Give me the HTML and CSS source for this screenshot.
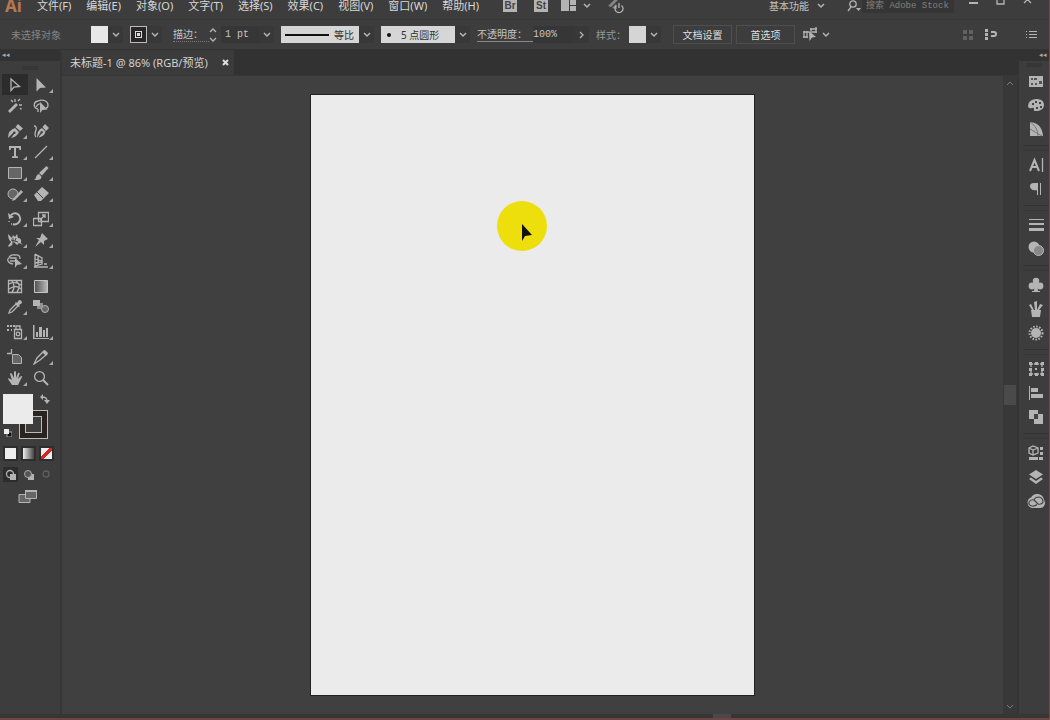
FILE: index.html
```html
<!DOCTYPE html>
<html lang="zh-CN">
<head>
<meta charset="utf-8">
<title>未标题-1</title>
<link rel="stylesheet" href="styles.css">
</head>
<body>
<header class="menubar">
  <span class="logo">Ai</span>
  <nav class="menus">
    <button>文件(F)</button><button>编辑(E)</button><button>对象(O)</button><button>文字(T)</button><button>选择(S)</button><button>效果(C)</button><button>视图(V)</button><button>窗口(W)</button><button>帮助(H)</button>
  </nav>
  <div class="apps">
    <button class="app">Br</button>
    <button class="app">St</button>
    <button class="arrange" aria-label="排列文档"><svg width="16" height="12" viewBox="0 0 16 12"><path d="M0 0h8v11H0zM9 0h6v5H9zM9 6h6v5H9z"/></svg><svg class="chev" viewBox="0 0 8 6"><path d="M1 1l3 3 3-3"/></svg></button>
    <button aria-label="GPU 性能"><svg width="18" height="16" viewBox="0 0 18 16"><path d="M1 8L8 1h4L4 9zM5 10l4-4 1 5z" opacity=".6"/><path class="ln" d="M9.500 7.500a4 4 0 1 0 5 0M12 5v5"/></svg></button>
  </div>
  <div class="window-tools">
    <button class="workspace">基本功能<svg class="chev" viewBox="0 0 8 6"><path d="M1 1l3 3 3-3"/></svg></button>
    <label class="search"><svg width="15" height="12" viewBox="0 0 15 12"><circle class="ln" cx="6" cy="4" r="3.200"/><path class="ln" d="M4 7L1 11"/><path d="M9 8h5l-2.500 3z"/></svg><input type="text" placeholder="搜索 Adobe Stock" aria-label="搜索 Adobe Stock"></label>
    <div class="win">
      <button aria-label="最小化"><svg width="10" height="12" viewBox="0 0 10 12"><path d="M0 7h9v2H0z"/></svg></button>
      <button aria-label="最大化"><svg width="10" height="12" viewBox="0 0 10 12"><path class="ln" d="M1 1h7v8H1z"/></svg></button>
      <button aria-label="关闭"><svg width="10" height="12" viewBox="0 0 10 12"><path class="ln" d="M1 1l7 7M8 1L1 8"/></svg></button>
    </div>
  </div>
</header>

<section class="control" aria-label="控制">
  <span class="state">未选择对象</span>
  <div class="pair"><button class="swatch" aria-label="填色"></button><button class="drop" aria-label="填色选项"><svg class="chev" viewBox="0 0 8 6"><path d="M1 1l3 3 3-3"/></svg></button></div>
  <div class="pair"><button class="swatch line" aria-label="描边颜色"><svg width="7" height="7" viewBox="0 0 7 7"><path d="M0 0h7v7H0z" fill="#ddd"/><path d="M1 1h5v5H1z" fill="#222"/><path d="M2 2h3v3H2z" fill="#ddd"/></svg></button><button class="drop" aria-label="描边选项"><svg class="chev" viewBox="0 0 8 6"><path d="M1 1l3 3 3-3"/></svg></button></div>
  <div class="pair weight"><label for="weight">描边：</label><button class="spin" aria-label="调整粗细"><svg width="8" height="14" viewBox="0 0 8 14"><path class="ln" d="M1 4l3-3 3 3M1 10l3 3 3-3"/></svg></button><input id="weight" type="text" value="1 pt"><button class="drop" aria-label="粗细选项"><svg class="chev" viewBox="0 0 8 6"><path d="M1 1l3 3 3-3"/></svg></button></div>
  <div class="pair"><div class="light profile"><i></i><select aria-label="变量宽度配置文件"><option>等比</option></select></div><span class="drop"><svg class="chev" viewBox="0 0 8 6"><path d="M1 1l3 3 3-3"/></svg></span></div>
  <div class="pair"><div class="light brush"><b></b><select aria-label="画笔定义"><option>5 点圆形</option></select></div><span class="drop"><svg class="chev" viewBox="0 0 8 6"><path d="M1 1l3 3 3-3"/></svg></span></div>
  <div class="pair opacity"><label for="opacity">不透明度：</label><input id="opacity" type="text" value="100%"><button class="drop" aria-label="不透明度选项"><svg width="6" height="8" viewBox="0 0 6 8"><path class="ln" d="M1 1l3 3-3 3"/></svg></button></div>
  <div class="pair style"><span class="dim">样式：</span><button class="swatch soft" aria-label="图形样式"></button><button class="drop" aria-label="样式选项"><svg class="chev" viewBox="0 0 8 6"><path d="M1 1l3 3 3-3"/></svg></button></div>
  <div class="actions"><button class="push">文档设置</button><button class="push">首选项</button></div>
  <button class="similar" aria-label="选择类似的对象"><svg width="15" height="15" viewBox="0 0 15 15"><path class="ln" d="M1 4v7M4 4v7M0 5h6M0 10h5M8 1v5M13 0v6M7 2h7M9 5h5"/><path d="M6 4l7 6-4 .5L6.500 14z"/></svg><svg class="chev" viewBox="0 0 8 6"><path d="M1 1l3 3 3-3"/></svg></button>
  <div class="far">
    <svg class="faint" width="12" height="12" viewBox="0 0 12 12"><path d="M1 1h4v4H1zM7 1h4v4H7zM1 7h4v4H1zM7 7h4v4H7z"/></svg>
    <button aria-label="对齐像素"><svg width="14" height="14" viewBox="0 0 14 14"><path d="M1 1h3v3H1zM1 5h3v3H1zM1 9h3v3H1z"/><path class="arc" d="M7 4h3q2 0 2 2t-2 2H7"/></svg></button>
    <button aria-label="面板菜单"><svg width="12" height="10" viewBox="0 0 12 10"><path d="M0 1h1v1H0zM0 4h1v1H0zM0 7h1v1H0zM3 1h8v1H3zM3 4h8v1H3zM3 7h8v1H3z"/></svg></button>
  </div>
</section>

<main class="work">
  <aside class="toolbox">
    <div class="strip">◂◂</div>
    <div class="grip"></div>
    <div class="tools">
      <div class="group">
        <button class="on" aria-label="选择"><svg class="ic" viewBox="0 0 16 16"><path class="ln" d="M4 2v11.500l3-3.500 5.500-.5z"/></svg></button>
        <button class="sub" aria-label="直接选择"><svg class="ic" viewBox="0 0 16 16"><path d="M3.500 1v13.500L7 11l6-.5z"/></svg></button>
        <button aria-label="魔棒"><svg class="ic" viewBox="0 0 16 16"><path d="M1 13l8-8 2 2-8 8z"/><path class="ln" d="M8 1v3M11 3l2-2M12 7h3M4 2l2 2M13 10l1.500 1.500"/></svg></button>
        <button aria-label="套索"><svg class="ic" viewBox="0 0 16 16"><path class="ln" d="M5 11C0 10 0 4 5 3c5-2 10 0 10 4 0 2-1 3-2 3M3 9q3-5 6-2M5 11v3"/><path d="M7 4v11l2.500-3 5-.5z"/></svg></button>
      </div>
      <div class="group">
        <button class="sub" aria-label="钢笔"><svg class="ic" viewBox="0 0 16 16"><path d="M1 15q0-8 7-10l4 4q-2 5-8 6l3-4a1.300 1.300 0 1 0-1-1zM8.500 4l2.500-3 5 4.500L13 8z"/></svg></button>
        <button aria-label="曲率"><svg class="ic" viewBox="0 0 16 16"><path d="M4 15q0-8 5-10l3.500 3.500q-1 5-7 6l3-4a1.200 1.200 0 1 0-1-1zM9.500 4L12 1l4 4-3 3z"/><path class="ln" d="M1 3q3 0 2 4-2 5 0 7"/></svg></button>
        <button class="sub" aria-label="文字"><svg class="ic" viewBox="0 0 16 16"><path d="M2 2h12v4h-1.500L12 4H9v8l2 .5V14H5v-1.500L7 12V4H4l-.5 2H2z"/></svg></button>
        <button class="sub" aria-label="直线段"><svg class="ic" viewBox="0 0 16 16"><path class="ln" d="M2 14L14 2"/></svg></button>
        <button class="sub" aria-label="矩形"><svg class="ic" viewBox="0 0 16 16"><path class="boxed" d="M1.500 2.500h13v11h-13z"/></svg></button>
        <button class="sub" aria-label="画笔"><svg class="ic" viewBox="0 0 16 16"><path d="M6 8l7.500-7 2 2L9 10.500zM1 15q2-1 2-3 1-3 3-3l2.500 2.500q0 3-3.500 3.500z"/></svg></button>
        <button class="sub" aria-label="Shaper"><svg class="ic" viewBox="0 0 16 16"><circle class="boxed" cx="6" cy="8" r="5"/><path d="M6 13l8-9 2 2-8 8-3 1z"/></svg></button>
        <button class="sub" aria-label="橡皮擦"><svg class="ic" viewBox="0 0 16 16"><path d="M1 9l8-8 7 6-8 8H5z"/><path class="cut" d="M4 6l6 6"/></svg></button>
      </div>
      <div class="group">
        <button class="sub" aria-label="旋转"><svg class="ic" viewBox="0 0 16 16"><path class="arc" d="M4 4c5-4 10 0 9 5-1 4-5 5-7 4"/><path d="M1 2l1 6 5-2z"/><path class="ln" d="M2 10v1M4 13h1"/></svg></button>
        <button class="sub" aria-label="比例缩放"><svg class="ic" viewBox="0 0 16 16"><path class="ln" d="M5.500 1.500h10v9h-10zM.5 7.500h8v7h-8zM7 9l5-5M9 4h3v3"/></svg></button>
        <button class="sub" aria-label="宽度"><svg class="ic" viewBox="0 0 16 16"><path d="M1 2l2 2 2 2 1-3 2 2 2-3 1 4q4 0 3 5l2 2-4-2-2 2-3-3-2 3q-3 3-4 1l3-4q-3-3-3-8z"/><path class="cut" d="M4 8l7 2M6 6v6M9 6l-1 3"/></svg></button>
        <button class="sub" aria-label="操控变形"><svg class="ic" viewBox="0 0 16 16"><path d="M9 1l6 6-2 1-2 1 0 4-3-3-6 5 4-7-3-2h4z"/></svg></button>
        <button class="sub" aria-label="形状生成器"><svg class="ic" viewBox="0 0 16 16"><path class="ln" d="M6 11C0 10 0 6 2 5q1-4 6-3 5-1 5 4M3 5h6v6M3 8h6"/><path d="M8 5v10l2-3 5-1z"/></svg></button>
        <button class="sub" aria-label="透视网格"><svg class="ic" viewBox="0 0 16 16"><path class="ln" d="M2 1v13M2 1l7 4v6l-7 2M5 3v9M2 6l7 2M2 10l7-1M1 14h14M11 11h3"/></svg></button>
      </div>
      <div class="group">
        <button aria-label="网格"><svg class="ic" viewBox="0 0 16 16"><path class="ln" d="M1.500 2.500h13v12h-13zM2 6q6-3 12 1M2 11q7-5 12 0M5 3q4 6 0 11M9 3q6 4 1 11"/></svg></button>
        <button aria-label="渐变"><svg class="ic" viewBox="0 0 16 16"><defs><linearGradient id="fade"><stop offset="0" stop-color="#505050"/><stop offset="1" stop-color="#bbb"/></linearGradient></defs><path d="M1.500 2.500h13v12h-13z" fill="url(#fade)" stroke="#c4c4c4"/></svg></button>
        <button class="sub" aria-label="吸管"><svg class="ic" viewBox="0 0 16 16"><path class="ln" d="M2 14l1-3 6-6 2 2-6 6z"/><path d="M8 4l1-1 1 1 2-3q3 0 3 3l-3 2 1 1-1 1z"/></svg></button>
        <button aria-label="混合"><svg class="ic" viewBox="0 0 16 16"><path d="M0 1h7v6H0z"/><path d="M4 4h6v6H4z" opacity=".7"/><circle class="boxed" cx="12" cy="10" r="3.500"/></svg></button>
      </div>
      <div class="group">
        <button class="sub" aria-label="符号喷枪"><svg class="ic" viewBox="0 0 16 16"><path class="ln" d="M7.500 5.500h7v9h-7zM9 5V2h4v3"/><circle class="ln" cx="11" cy="10" r="1.800"/><path d="M0 1h2v2H0zM3 1h2v2H3zM0 5h2v2H0zM4 5h1v2H4zM6 1h2v2H6z"/></svg></button>
        <button class="sub" aria-label="柱形图"><svg class="ic" viewBox="0 0 16 16"><path d="M0 1h1.500v13H16v1H0zM3 8h2v5H3zM6 3h3v10H6zM10 6h2v7h-2zM13 4h2v9h-2z"/></svg></button>
      </div>
      <div class="group">
        <button aria-label="画板"><svg class="ic" viewBox="0 0 16 16"><path class="ln" d="M0 4.500h5M4.500 0v5"/><path class="boxed" d="M5.500 5.500h6l3 3v6h-9z"/></svg></button>
        <button class="sub" aria-label="切片"><svg class="ic" viewBox="0 0 16 16"><path class="ln" d="M1 15l3-6 7-7 3 3-7 6z"/><path d="M9 3l3-2 3 3-2 3z"/></svg></button>
        <button class="sub" aria-label="抓手"><svg class="ic" viewBox="0 0 16 16"><path d="M5 15L1 9q0-2 4 1L3 4q1-2 2 0l2 4V2q1-2 2 0v6l2-5q2-1 1.500 1L11 9l3-3q2 0 1 1l-4 8z"/></svg></button>
        <button aria-label="缩放"><svg class="ic" viewBox="0 0 16 16"><circle class="ln" cx="6.500" cy="6.500" r="4.900"/><path class="arc" d="M10 10l5 5"/></svg></button>
      </div>
    </div>
    <div class="paint">
      <button class="stroke-box" aria-label="描边"></button>
      <button class="fill-box" aria-label="填色"></button>
      <button class="swap" aria-label="互换"><svg width="10" height="10" viewBox="0 0 10 10"><path class="ln" d="M2 3q5 0 5 4"/><path d="M0 3l3-3v6zM4 6h6L7 10z"/></svg></button>
      <button class="reset" aria-label="默认"><svg width="8" height="8" viewBox="0 0 8 8"><path d="M3 3h5v5H3z" fill="#111" stroke="#aaa"/><path d="M0 0h5v5H0z" fill="#eee"/></svg></button>
    </div>
    <div class="modes">
      <button class="solid" aria-label="颜色"></button><button class="grad" aria-label="渐变填色"></button><button class="none" aria-label="无"></button>
    </div>
    <div class="modes draw">
      <button class="on" aria-label="正常绘图"><svg width="12" height="12" viewBox="0 0 12 12"><circle class="ln" cx="5" cy="5" r="3.500"/><path d="M5 5h6v6H5z"/></svg></button>
      <button aria-label="背面绘图"><svg width="12" height="12" viewBox="0 0 12 12"><path d="M5 5h6v6H5z"/><circle cx="5" cy="5" r="3.500" fill="#555" stroke="#aaa"/></svg></button>
      <button class="faint" aria-label="内部绘图"><svg width="12" height="12" viewBox="0 0 12 12"><circle class="ln" cx="5" cy="5" r="3"/></svg></button>
    </div>
    <button class="screen" aria-label="更改屏幕模式"><svg width="20" height="15" viewBox="0 0 20 15"><path class="boxed" d="M1 5.500h11v8H1z"/><path class="boxed" d="M7.500 1.500h11v8h-11z"/><path d="M7 1h12v2H7z"/></svg></button>
  </aside>

  <section class="document">
    <div class="tabs"><div class="tab"><span>未标题-1 @ 86% (RGB/预览)</span><button aria-label="关闭文档"><svg width="7" height="7" viewBox="0 0 7 7"><path class="x" d="M1 1l5 5M6 1L1 6"/></svg></button></div></div>
    <div class="view">
      <div class="canvas"><div class="artboard"><div class="spot"><svg width="12" height="18" viewBox="0 0 12 18"><path d="M2 0v17l3-5 7-1z" fill="#111"/></svg></div></div></div>
      <div class="scroll"><svg class="chev" viewBox="0 0 8 6"><path d="M1 5l3-3 3 3"/></svg><i class="thumb"></i><svg class="chev" viewBox="0 0 8 6"><path d="M1 1l3 3 3-3"/></svg></div>
    </div>
  </section>

  <aside class="dock">
    <div class="strip">◂◂</div>
    <div class="grip"></div>
    <div class="panels">
      <div class="set">
        <button aria-label="色板"><svg class="ic" viewBox="0 0 16 16"><path d="M1 3h14v11H1z"/><path d="M3 5h2v2H3zM6 5h3v2H6zM11 8h3v3h-3zM3 10h2v2H3zM7 10h2v2H7z" fill="#555"/></svg></button>
        <button aria-label="颜色"><svg class="ic" viewBox="0 0 16 16"><path d="M8 2c5 0 8 2 8 6s-4 6-8 6q-3 0-2-2 0-2-2-1-4 1-4-2 0-6 8-7z"/><path d="M4 6h2v2H4zM7 4h2v2H7zM11 5h2v2h-2zM12 9h2v2h-2zM8 10h2v2H8z" fill="#444"/></svg></button>
        <button aria-label="颜色参考"><svg class="ic" viewBox="0 0 16 16"><path d="M2 1q12 1 13 14H2z"/><path d="M2 1q8 5 8 14M2 8l12 7" stroke="#777" fill="none"/></svg></button>
      </div>
      <div class="set">
        <button aria-label="字符"><svg class="ic" viewBox="0 0 16 16"><path class="arc" d="M2 14L6.500 3 11 14M4 10h5"/><path class="ln" d="M14.500 1v14"/></svg></button>
        <button aria-label="段落"><svg class="ic" viewBox="0 0 16 16"><path d="M9 2v7Q2 10 2 5q0-3 4-3zM9 2h1v12H9zM12 2h1v12h-1z"/></svg></button>
      </div>
      <div class="set">
        <button aria-label="描边"><svg class="ic" viewBox="0 0 16 16"><path d="M1 2h15v1H1zM1 6h15v2H1zM1 11h15v3H1z"/></svg></button>
        <button aria-label="透明度"><svg class="ic" viewBox="0 0 16 16"><circle cx="6" cy="6" r="5.500"/><circle cx="10.500" cy="9.500" r="5" fill="#888" stroke="#bbb"/></svg></button>
      </div>
      <div class="set">
        <button aria-label="符号"><svg class="ic" viewBox="0 0 16 16"><circle cx="8" cy="4" r="3.200"/><circle cx="4" cy="9" r="3.400"/><circle cx="12" cy="9" r="3.400"/><path d="M7 6h2l1 8h2v1H4v-1h2z"/></svg></button>
        <button aria-label="画笔面板"><svg class="ic" viewBox="0 0 16 16"><path d="M3 9h10l-1 7H4zM4 9L1 4l2-1 3 6zM7 9L6 1l3-1v9zM9 9l3-6 3 1-4 5z"/></svg></button>
        <button aria-label="外观"><svg class="ic" viewBox="0 0 16 16"><circle cx="8" cy="8" r="5"/><circle cx="8" cy="8" r="6.500" fill="none" stroke="#b4b4b4" stroke-width="2" stroke-dasharray="1.500 1.500"/></svg></button>
      </div>
      <div class="set">
        <button aria-label="变换"><svg class="ic" viewBox="0 0 16 16"><path class="ln" d="M3 3h11v10H3z" stroke-dasharray="2 1"/><path d="M1 1h3v3H1zM7 1h3v3H7zM13 1h3v3h-3zM1 7h3v3H1zM7 7h2v2H7zM13 7h3v3h-3zM1 12h3v3H1zM7 12h3v3H7zM13 12h3v3h-3z"/></svg></button>
        <button aria-label="对齐"><svg class="ic" viewBox="0 0 16 16"><path d="M1 1h1v14H1zM3 3h7v4H3zM3 9h12v4H3z"/></svg></button>
        <button aria-label="路径查找器"><svg class="ic" viewBox="0 0 16 16"><path d="M1 1h9v4h5v10H6v-5H1z"/><path d="M6 5h4v5H6z" fill="#444"/></svg></button>
      </div>
      <div class="set">
        <button aria-label="属性"><svg class="ic" viewBox="0 0 16 16"><path class="ln" d="M1 3l4-2 5 2v5l-5 2-4-2zM1 3l4 2 5-2M5 5v5"/><path d="M12 2h3v3h-3zM12 7h3v3h-3zM1 12h9v3H1zM11 12h4v3h-4z"/></svg></button>
        <button aria-label="图层"><svg class="ic" viewBox="0 0 16 16"><path d="M8 1l7 4.500L8 10 1 5.500zM1 10l2-1.500L8 12l5-3.500 2 1.500-7 5z"/></svg></button>
        <button aria-label="库"><svg class="cc" viewBox="0 0 20 16"><path d="M6 15a5.500 5.500 0 0 1-1-10.500A7 7 0 0 1 18 7q2 3 0 6-1 2-4 2z"/><path d="M11 11.500q-2 2-5 1.500-4-1-3-4 2-3 5-2l4 4q4 1 5-2 0-4-4-5-4 0-5 3" stroke="#444" stroke-width="1.200" fill="none"/></svg></button>
      </div>
    </div>
  </aside>
</main>
<footer class="edge"><i></i></footer>
</body>
</html>
```
FILE: styles.css
```css
* { box-sizing: border-box; }
body {
  margin: 0;
  height: 100vh;
  display: flex;
  flex-direction: column;
  overflow: hidden;
  background: #3d3d3d;
  color: #c4c4c4;
  border-right: 1px solid #8e3d36;
  font: 10px/14px "Noto Sans", "Noto Sans CJK SC", sans-serif;
}
button, input, select {
  font: inherit;
  color: inherit;
  background: none;
  border: 0;
  padding: 0;
  margin: 0;
  appearance: none;
  border-radius: 0;
  white-space: nowrap;
}
button { display: flex; align-items: center; justify-content: center; }
svg { display: block; flex: none; fill: #b4b4b4; }
.ic { width: 16px; height: 16px; }
.cc { width: 20px; height: 16px; }
.ln, .arc, .x { fill: none; stroke: #b4b4b4; stroke-width: 1.3; }
.arc { stroke-width: 2; }
.x { stroke: #ddd; stroke-width: 2; }
.cut { fill: none; stroke: #444; }
.boxed { fill: #666; stroke: #b4b4b4; }
.chev { width: 8px; height: 6px; fill: none; stroke: #b4b4b4; stroke-width: 1.5; }
.faint { opacity: .3; }

.menubar {
  flex: none;
  height: 20px;
  padding: 0 14px 8px 5px;
  display: flex;
  align-items: center;
  border-bottom: 1px solid #363636;
}
.logo { width: 32px; font: bold 17px/12px "Noto Sans", sans-serif; color: #b67850; }
.menus { display: flex; gap: 15px; font-size: 11px; line-height: 12px; color: #d8d8d8; }
.apps { display: flex; align-items: center; margin-left: 24px; }
.app {
  width: 14px;
  height: 12px;
  margin-right: 17px;
  background: #b4b4b4;
  color: #444;
  font: bold 10px/12px "Liberation Sans", sans-serif;
}
.arrange { gap: 6px; margin: 0 16px 0 -4px; }
.window-tools { display: flex; align-items: center; margin-left: auto; }
.workspace { gap: 8px; margin-right: 22px; }
.search { display: flex; align-items: center; }
.search input {
  width: 92px;
  height: 14px;
  padding-left: 4px;
  background: #353535;
  font: 9px/14px "Liberation Mono", "Noto Sans CJK SC", monospace;
}
.search input::placeholder { color: #808080; }
.win { display: flex; gap: 17px; margin-left: 15px; padding: 0 2px 10px 0; }

.control {
  flex: none;
  height: 30px;
  padding: 0 11px;
  display: flex;
  align-items: center;
  border-bottom: 1px solid #333;
}
.state { width: 80px; color: #858585; }
.pair { display: flex; align-items: center; margin-right: 7px; }
.drop { display: flex; align-items: center; justify-content: center; width: 15px; height: 17px; background: #383838; }
.swatch { width: 17px; height: 17px; background: #e8e8e8; }
.swatch.line { background: #2a2526; border: 1px solid #bbb; }
.swatch.soft { background: #d5d5d5; }
.weight { margin-left: 4px; }
.weight label { width: 36px; border-bottom: 1px dotted #777; }
.pair input { height: 17px; background: #363636; font: 10px/17px "Liberation Mono", monospace; }
.weight input { width: 38px; margin-left: 4px; padding-left: 4px; }
.light { display: flex; align-items: center; height: 17px; background: #d6d6d6; color: #333; }
.profile { width: 78px; padding-left: 4px; gap: 5px; }
.profile i { width: 44px; height: 2px; background: #111; }
.brush { width: 74px; padding-left: 6px; gap: 10px; }
.brush b { width: 4px; height: 4px; border-radius: 50%; background: #111; }
.opacity label { width: 56px; border-bottom: 1px solid #888; }
.opacity input { width: 41px; }
.dim { color: #999; width: 33px; }
.actions { display: flex; gap: 4px; margin-left: 5px; }
.push { width: 59px; height: 19px; border: 1px solid #4e4e4e; color: #ddd; }
.similar { margin-left: 8px; gap: 4px; }
.far { display: flex; align-items: center; margin-left: auto; gap: 10px; }
.far button:last-child { margin-left: 18px; }

.work { flex: 1; min-height: 0; display: flex; }
.toolbox { flex: none; width: 62px; border-right: 2px solid #363636; }
.strip { height: 11px; background: #323232; color: #aaa; font-size: 7px; line-height: 10px; padding-left: 2px; }
.grip { height: 13px; display: flex; align-items: center; justify-content: center; }
.grip::after { content: ""; width: 16px; height: 4px; background: #363636; }
.tools { display: flex; flex-direction: column; gap: 4px; padding-left: 2px; }
.group { display: grid; grid-template-columns: 26px 26px; grid-auto-rows: 21px; }
.group button { position: relative; }
.group .on, .modes .on { background: #2c2c2c; }
.sub::after {
  content: "";
  position: absolute;
  right: 1px;
  bottom: 2px;
  border: 2px solid #aaa;
  border-top-color: transparent;
  border-left-color: transparent;
}
.paint { position: relative; height: 46px; margin: 6px 0 0 3px; }
.fill-box { position: absolute; left: 0; top: 0; width: 30px; height: 30px; background: #ebebeb; }
.stroke-box { position: absolute; left: 16px; top: 16px; width: 29px; height: 29px; background: #2a2324; border: 1px solid #bbb; }
.stroke-box::after { content: ""; width: 15px; height: 15px; border: 1px solid #bbb; background: #3d3d3d; }
.swap { position: absolute; left: 37px; top: 0; }
.reset { position: absolute; left: 1px; top: 35px; }
.modes { display: flex; gap: 3px; padding: 6px 0 0 3px; }
.modes button { width: 15px; height: 15px; border: 2px solid #2e2e2e; }
.modes .solid { background: #eee; }
.modes .grad { background: linear-gradient(90deg, #eee, #444); }
.modes .none { background: linear-gradient(135deg, #eee 38%, #d4271f 38%, #d4271f 62%, #eee 62%); }
.modes.draw button { border: 0; }
.screen { margin: 7px 0 0 18px; }

.document { flex: 1; min-width: 0; display: flex; flex-direction: column; }
.tabs { flex: none; height: 26px; background: #323232; border-bottom: 1px solid #363636; display: flex; }
.tab { display: flex; align-items: center; gap: 14px; padding: 0 5px 0 8px; background: #3b3b3b; font-size: 11px; color: #d2d2d2; }
.view { flex: 1; min-height: 0; display: flex; }
.canvas { flex: 1; min-width: 0; padding: 19px; display: flex; justify-content: center; background: #404040; }
.artboard { position: relative; height: 100%; aspect-ratio: 443 / 600; background: #ebebeb; outline: 1px solid #222; }
.spot {
  position: absolute;
  left: 42%;
  top: 17.6%;
  width: 50px;
  height: 50px;
  border-radius: 50%;
  background: #ecdf0c;
  padding: 23px 0 0 23px;
}
.scroll { flex: none; width: 16px; background: #383838; display: flex; flex-direction: column; align-items: center; justify-content: space-between; padding: 4px 0; border-right: 2px solid #343434; }
.scroll .chev { stroke: #777; stroke-width: 1; }
.thumb { width: 12px; height: 20px; background: #4a4a4a; }

.dock { flex: none; width: 30px; }
.dock .strip { text-align: right; padding-right: 2px; }
.dock .grip { height: 8px; }
.panels { display: flex; flex-direction: column; gap: 12px; padding-left: 4px; }
.set { display: flex; flex-direction: column; position: relative; }
.set button { height: 24px; }
.set + .set::before { content: ""; position: absolute; left: 0; right: 0; top: -8px; height: 4px; border-top: 1px solid #333; border-bottom: 1px solid #363636; }
.edge { flex: none; height: 6px; padding-left: 68%; background: #363636; border-bottom: 2px solid #704444; }
.edge i { display: block; width: 18px; height: 4px; background: #4c4848; }
```
